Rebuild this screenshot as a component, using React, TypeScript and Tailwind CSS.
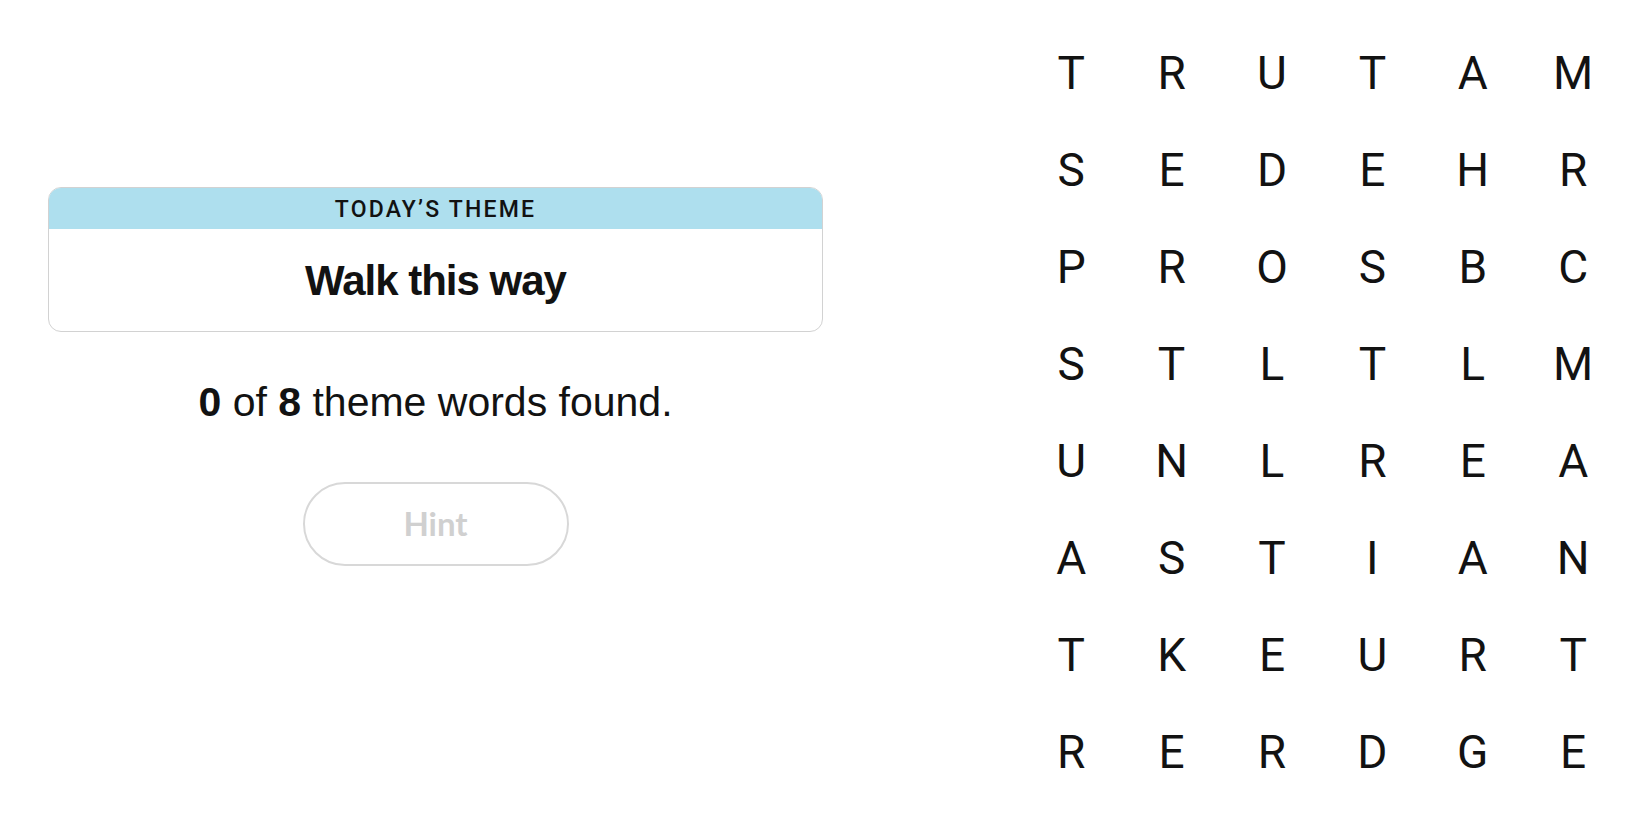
import React from "react";

const grid = [
  "TRUTAM",
  "SEDEHR",
  "PROSBC",
  "STLTLM",
  "UNLREA",
  "ASTIAN",
  "TKEURT",
  "RERDGE",
];

export default function App() {
  return (
    <div className="flex w-[1650px] h-[825px] bg-white text-[#121212] overflow-hidden font-['Liberation_Sans',Arial,sans-serif]">
      <div className="w-[1021px] shrink-0 pl-[48px] pt-[187px] flex flex-col">
        <div className="w-[775px] h-[145px] border border-[#d2d2d2] rounded-[13px] overflow-hidden flex flex-col">
          <div className="h-[41px] pt-[3px] bg-[#aedfee] flex items-center justify-center text-[23px] tracking-[2.2px] font-medium font-['Roboto',sans-serif]">
            TODAY’S THEME
          </div>
          <div className="flex-1 flex items-center justify-center text-[42px] font-bold tracking-[-1px]">
            Walk this way
          </div>
        </div>
        <div className="w-[775px] mt-[46px] text-center text-[41px] leading-[48px]">
          <span className="font-bold">0</span> of <span className="font-bold">8</span> theme words found.
        </div>
        <div className="w-[775px] mt-[56px] flex justify-center">
          <button className="w-[266px] h-[84px] rounded-full border-2 border-[#d8d8d8] text-[#d0d0d0] font-bold text-[33px] font-['Lato',sans-serif] bg-white">
            Hint
          </button>
        </div>
      </div>
      <div className="pt-[24px]">
        <div className="grid grid-cols-[repeat(6,100.4px)] grid-rows-[repeat(8,97.1px)] font-['Roboto',sans-serif]">
          {grid.flatMap((row, r) =>
            row.split("").map((ch, c) => (
              <div key={`${r}-${c}`} className="flex items-center justify-center text-[46px] leading-none">
                {ch}
              </div>
            ))
          )}
        </div>
      </div>
    </div>
  );
}
